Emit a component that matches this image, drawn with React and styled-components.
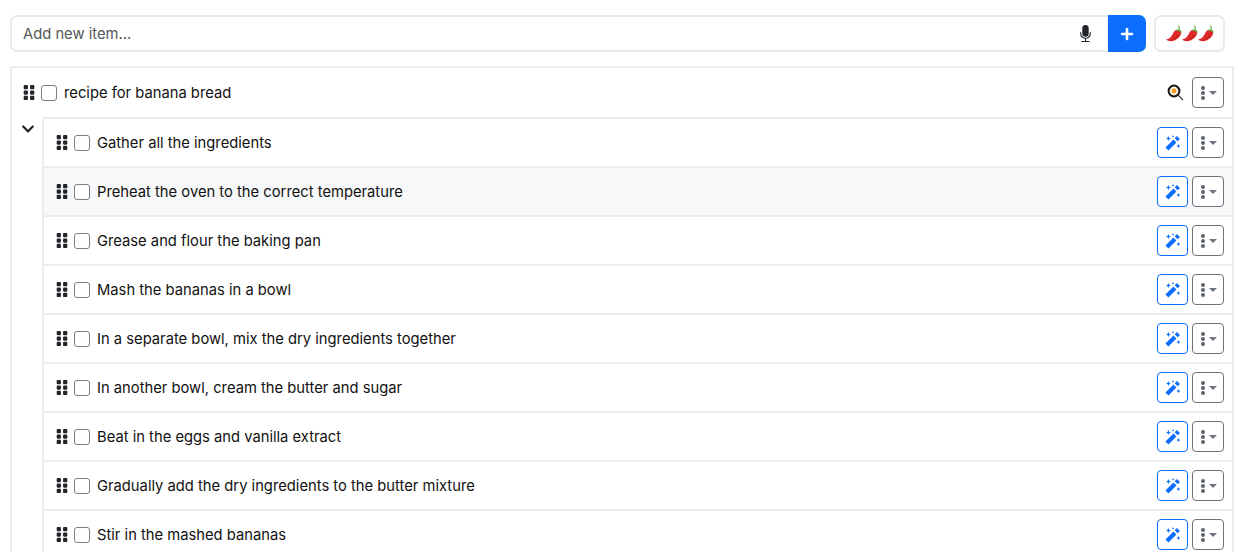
import styled, { createGlobalStyle } from "styled-components";
import { FaGripVertical, FaChevronDown, FaPlus } from "react-icons/fa";
import { BsMicFill } from "react-icons/bs";

const STEPS = [
  "Gather all the ingredients",
  "Preheat the oven to the correct temperature",
  "Grease and flour the baking pan",
  "Mash the bananas in a bowl",
  "In a separate bowl, mix the dry ingredients together",
  "In another bowl, cream the butter and sugar",
  "Beat in the eggs and vanilla extract",
  "Gradually add the dry ingredients to the butter mixture",
  "Stir in the mashed bananas",
];

const GlobalStyle = createGlobalStyle`
  html, body {
    margin: 0;
    height: 552px;
    overflow: hidden;
    background: #fff;
    font-family: Inter, "Liberation Sans", sans-serif;
    color: #111;
  }
  * {
    box-sizing: border-box;
  }
`;

const Page = styled.div`
  padding: 15px 16px 0 10px;
`;
const TopBar = styled.div`
  display: flex;
  gap: 8px;
  padding-right: 9px;
`;
const InputGroup = styled.div`
  flex: 1;
  display: flex;
  height: 37px;
`;
const InputBox = styled.div`
  flex: 1;
  display: flex;
  align-items: center;
  justify-content: space-between;
  border: 2px solid #e8eaed;
  border-right: 0;
  border-radius: 7px 0 0 7px;
  padding: 0 14px 0 11px;
  font-size: 14.75px;
  color: #55585b;
`;
const MicIcon = styled(BsMicFill)`
  width: 17px;
  height: 17px;
  color: #212529;
`;
const AddButton = styled.button`
  width: 38px;
  border: 0;
  padding: 0;
  background: #0d6efd;
  color: #fff;
  border-radius: 0 7px 7px 0;
  display: flex;
  align-items: center;
  justify-content: center;
`;
const SpiceButton = styled.button`
  width: 71px;
  height: 37px;
  border: 2px solid #e8eaed;
  border-radius: 7px;
  background: #fff;
  padding: 0;
  display: flex;
  align-items: center;
  justify-content: center;
`;
const List = styled.div`
  margin-top: 14px;
  border: 2px solid #eaecef;
  border-bottom: 0;
`;
const Row = styled.div`
  display: flex;
  align-items: center;
  height: ${(p) => (p.$first ? "47px" : "49px")};
  padding: 0 8px 0 11px;
  background: ${(p) => (p.$hover ? "#f7f8f9" : "#fff")};
  border-top: ${(p) => (p.$first ? "0" : "2px solid #eaecef")};
`;
const ParentRow = styled(Row)`
  height: 49px;
  padding-left: 10px;
  border-top: 0;
`;
const Children = styled.div`
  display: flex;
`;
const Gutter = styled.div`
  width: 30px;
  flex: none;
  padding: 5px 0 0 2px;
  display: flex;
  justify-content: center;
`;
const ChildList = styled.div`
  flex: 1;
  border-left: 2px solid #eaecef;
  border-top: 2px solid #eaecef;
`;
const Grip = styled(FaGripVertical)`
  width: 14px;
  height: 17px;
  color: #212529;
  flex: none;
`;
const Check = styled.span`
  width: 16px;
  height: 16px;
  flex: none;
  margin-left: 5px;
  border: 1px solid #777e85;
  border-radius: 3px;
  background: #fff;
`;
const Label = styled.span`
  flex: 1;
  margin-left: 7px;
  font-size: 14.75px;
  white-space: nowrap;
  color: #111;
`;
const IconButton = styled.button`
  width: ${(p) => (p.$primary ? "31px" : "32px")};
  height: 31px;
  margin-left: 4px;
  padding: ${(p) => (p.$primary ? "0" : "0 0 0 2px")};
  background: #fff;
  border: 1px solid ${(p) => (p.$primary ? "#0d6efd" : "#6c757d")};
  color: ${(p) => (p.$primary ? "#0d6efd" : "#495057")};
  border-radius: 4px;
  display: flex;
  align-items: center;
  justify-content: center;
  gap: 4px;
`;
const Caret = styled.span`
  width: 0;
  height: 0;
  border-top: 4px solid #6c757d;
  border-left: 4px solid transparent;
  border-right: 4px solid transparent;
`;
const Dots = styled.span`
  display: flex;
  flex-direction: column;
  gap: 1px;
  & > i {
    width: 4px;
    height: 4px;
    border-radius: 50%;
    background: #5c636a;
  }
`;
const SearchSlot = styled.span`
  width: 20px;
  height: 20px;
  margin-right: 3px;
  display: flex;
  align-items: center;
  justify-content: center;
`;

const Chili = () => (
  <svg width="16" height="17" viewBox="0.5 0.5 15 16">
    <path d="M10 5.500C12 4.500 15 5 14.700 8.200 14.300 11.500 10 15.500 5 15.700 3 15.800 1 15 .6 14.200 4 13.400 5.600 11.500 6.800 9 7.600 7.400 8.400 5.800 10 5.500z" fill="#e02a2a" />
    <path d="M4 14.800C7.500 14.500 10.500 12 12 8.500 12.800 10.500 9 14.500 5 15z" fill="#b01c1c" />
    <path d="M9.500 5.900C10.500 4.400 13.500 4 14.800 6.300 15 7 15 7.500 14.800 8 14 6.500 11.500 5.900 9.500 5.900z" fill="#5f9a3c" />
    <path d="M12.400 4.800C12.700 3.500 12.300 2.300 11.400 1.400L12.400 .8C13.500 2 13.700 3.500 13.400 5z" fill="#7cab50" />
  </svg>
);

const EggSearch = () => (
  <svg width="17" height="17" viewBox="0 0 17 17">
    <circle cx="7" cy="7" r="5.400" fill="#fbf3df" stroke="#141414" strokeWidth="2" />
    <circle cx="7" cy="7" r="2.400" fill="#f59a1f" />
    <path d="M11 11l5 5" stroke="#444" strokeWidth="1.300" />
  </svg>
);

const Wand = () => (
  <svg width="16" height="16" viewBox="0 0 15 15" fill="currentColor">
    <path d="M1.800 13.200L9.300 5.700" stroke="currentColor" strokeWidth="4" />
    <path d="M10.500 4.500L12.600 2.400" stroke="currentColor" strokeWidth="4" />
    <path d="M3.200 1L3.900 2.600 5.500 3.300 3.900 4 3.200 5.600 2.500 4 .9 3.300 2.500 2.600z" />
    <path d="M7.500 0L7.900 .9 8.800 1.300 7.900 1.700 7.500 2.600 7.100 1.700 6.200 1.300 7.100 .9z" />
    <path d="M12.600 8.500L13.200 9.800 14.500 10.400 13.200 11 12.600 12.300 12 11 10.700 10.400 12 9.800z" />
  </svg>
);

const Menu = () => (
  <IconButton>
    <Dots>
      <i />
      <i />
      <i />
    </Dots>
    <Caret />
  </IconButton>
);

const App = () => {
  return (
    <Page>
      <GlobalStyle />
      <TopBar>
        <InputGroup>
          <InputBox>
            Add new item...
            <MicIcon />
          </InputBox>
          <AddButton>
            <FaPlus size={14} />
          </AddButton>
        </InputGroup>
        <SpiceButton>
          <Chili />
          <Chili />
          <Chili />
        </SpiceButton>
      </TopBar>
      <List>
        <ParentRow>
          <Grip />
          <Check />
          <Label>recipe for banana bread</Label>
          <SearchSlot>
            <EggSearch />
          </SearchSlot>
          <Menu />
        </ParentRow>
        <Children>
          <Gutter>
            <FaChevronDown size={14} color="#212529" />
          </Gutter>
          <ChildList>
            {STEPS.map((step, i) => (
              <Row key={step} $first={i === 0} $hover={i === 1}>
                <Grip />
                <Check />
                <Label>{step}</Label>
                <IconButton $primary>
                  <Wand />
                </IconButton>
                <Menu />
              </Row>
            ))}
          </ChildList>
        </Children>
      </List>
    </Page>
  );
};

export default App;
